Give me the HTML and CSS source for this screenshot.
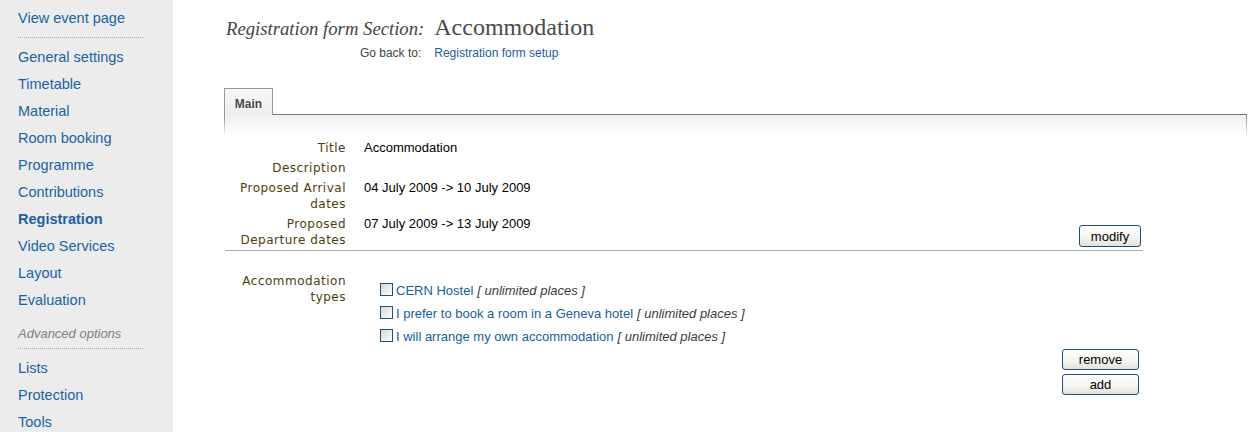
FILE: index.html
```html
<!DOCTYPE html>
<html>
<head>
<meta charset="utf-8">
<link rel="stylesheet" href="styles.css">
</head>
<body>
<div class="page">
  <nav class="sidebar">
    <a class="nav-item">View event page</a>
    <div class="sep"></div>
    <a class="nav-item">General settings</a>
    <a class="nav-item">Timetable</a>
    <a class="nav-item">Material</a>
    <a class="nav-item">Room booking</a>
    <a class="nav-item">Programme</a>
    <a class="nav-item">Contributions</a>
    <a class="nav-item active">Registration</a>
    <a class="nav-item">Video Services</a>
    <a class="nav-item">Layout</a>
    <a class="nav-item">Evaluation</a>
    <div class="nav-group">Advanced options</div>
    <div class="sep sep-adv"></div>
    <a class="nav-item">Lists</a>
    <a class="nav-item">Protection</a>
    <a class="nav-item">Tools</a>
  </nav>
  <main class="main">
    <div class="heading">
      <span class="h-label">Registration form Section:</span>
      <span class="h-title">Accommodation</span>
      <span class="back-label">Go back to:</span>
      <a class="back-link">Registration form setup</a>
    </div>
    <div class="tabs">
      <div class="tab">Main</div>
      <div class="tab-fill"></div>
    </div>
    <div class="panel-top"></div>
    <div class="form">
      <div class="label">Title</div>
      <div class="value">Accommodation</div>
      <div class="label">Description</div>
      <div class="value"></div>
      <div class="label">Proposed Arrival dates</div>
      <div class="value">04 July 2009 -&gt; 10 July 2009</div>
      <div class="label">Proposed Departure dates</div>
      <div class="value value-split">
        <span>07 July 2009 -&gt; 13 July 2009</span>
        <button class="btn btn-modify">modify</button>
      </div>
    </div>
    <div class="rule"></div>
    <div class="form accom">
      <div class="label">Accommodation types</div>
      <div class="options">
        <div class="option"><span class="check"></span><a class="opt-link">CERN Hostel</a><span class="places">[ unlimited places ]</span></div>
        <div class="option"><span class="check"></span><a class="opt-link">I prefer to book a room in a Geneva hotel</a><span class="places">[ unlimited places ]</span></div>
        <div class="option"><span class="check"></span><a class="opt-link">I will arrange my own accommodation</a><span class="places">[ unlimited places ]</span></div>
      </div>
    </div>
    <div class="actions">
      <button class="btn btn-wide">remove</button>
      <button class="btn btn-wide">add</button>
    </div>
  </main>
</div>
</body>
</html>
```

FILE: styles.css
```css
html, body {
  margin: 0;
  padding: 0;
  background: #fff;
}

.page {
  display: flex;
  min-height: 432px;
}

.sidebar {
  width: 173px;
  flex: none;
  background: #ececec;
  padding-top: 5px;
  display: flex;
  flex-direction: column;
  font-family: "Liberation Sans", Arial, sans-serif;
  font-size: 14.5px;
}

.nav-item {
  display: block;
  height: 27px;
  line-height: 27px;
  padding-left: 18px;
  color: #1a62a6;
  white-space: nowrap;
}

.nav-item.active {
  font-weight: bold;
}

.sep {
  margin: 5px 0 6px 18px;
  width: 125px;
  border-top: 1px dotted #a9a9a9;
}

.sep-adv {
  margin-top: 4px;
}

.nav-group {
  margin-top: 10px;
  padding-left: 18px;
  line-height: 20px;
  font-size: 13px;
  font-style: italic;
  color: #808080;
}

.main {
  flex: 1;
  padding: 13px 13px 0 51px;
  font-family: "Liberation Sans", Arial, sans-serif;
  font-size: 13px;
}

.heading {
  display: grid;
  grid-template-columns: auto auto;
  justify-content: start;
  column-gap: 10px;
  align-items: baseline;
  margin-left: 2px;
}

.h-label {
  justify-self: end;
  font-family: "Liberation Serif", "Times New Roman", serif;
  font-style: italic;
  font-size: 18.7px;
  color: #444;
  line-height: 28px;
}

.h-title {
  font-family: "Liberation Serif", "Times New Roman", serif;
  font-size: 24px;
  color: #4a4a4a;
  line-height: 28px;
}

.back-label {
  justify-self: end;
  font-size: 12px;
  color: #444;
  line-height: 16px;
  margin-top: 2px;
  padding-right: 3px;
}

.back-link {
  font-size: 12px;
  color: #1a5d9e;
  line-height: 16px;
}

.tabs {
  display: flex;
  margin-top: 27px;
  height: 27px;
}

.tab {
  box-sizing: border-box;
  width: 49px;
  height: 27px;
  border: 1px solid #999;
  border-bottom: none;
  background: linear-gradient(#f7f7f7, #efefef);
  font-size: 12px;
  font-weight: bold;
  color: #4a4a4a;
  text-align: center;
  line-height: 30px;
}

.tab-fill {
  flex: 1;
  box-sizing: border-box;
  height: 27px;
  border-bottom: 1px solid #777;
}

.panel-top {
  height: 20px;
  border-style: solid;
  border-width: 0 1px;
  border-image: linear-gradient(to bottom, #888, rgba(136, 136, 136, 0)) 1;
  background: linear-gradient(#efefef, #fff);
}

.form {
  display: grid;
  grid-template-columns: 121px 1fr;
  column-gap: 18px;
  row-gap: 4px;
  width: 918px;
  margin-left: 1px;
  margin-top: 5px;
  line-height: 16px;
}

.label {
  text-align: right;
  font-family: "DejaVu Sans", Verdana, sans-serif;
  font-size: 12px;
  letter-spacing: 0.5px;
  color: #4e3d0c;
  padding-left: 2px;
}

.value {
  color: #000;
  font-size: 13px;
}

.value-split {
  display: flex;
  justify-content: space-between;
}

.btn {
  box-sizing: border-box;
  font-family: "Liberation Sans", Arial, sans-serif;
  font-size: 13px;
  color: #000;
  border: 1px solid #1d4e7d;
  border-radius: 3px;
  background: linear-gradient(#ffffff, #f4f4f0 60%, #e2e1da);
  padding: 0;
  margin: 0;
}

.btn-modify {
  width: 62px;
  height: 22px;
  align-self: flex-end;
  margin-bottom: 1px;
  margin-right: 2px;
}

.rule {
  width: 918px;
  margin-left: 1px;
  margin-top: 2px;
  height: 1px;
  background: #aaa;
}

.accom {
  margin-top: 22px;
}

.options {
  padding-top: 6px;
  padding-left: 16px;
}

.option {
  display: flex;
  align-items: center;
  height: 23px;
  white-space: nowrap;
}

.check {
  box-sizing: border-box;
  width: 13px;
  height: 13px;
  border: 1px solid #1c5180;
  background: linear-gradient(135deg, #d8d8d2, #fdfdfd);
  margin-right: 3px;
  margin-top: -3px;
}

.opt-link {
  color: #1a5d9e;
}

.places {
  margin-left: 4px;
  font-style: italic;
  color: #3c3c3c;
}

.actions {
  width: 918px;
  margin-left: 1px;
  margin-top: 1px;
  display: flex;
  flex-direction: column;
  align-items: flex-end;
  gap: 4px;
}

.btn-wide {
  width: 77px;
  height: 21px;
  margin-right: 4px;
}
```
